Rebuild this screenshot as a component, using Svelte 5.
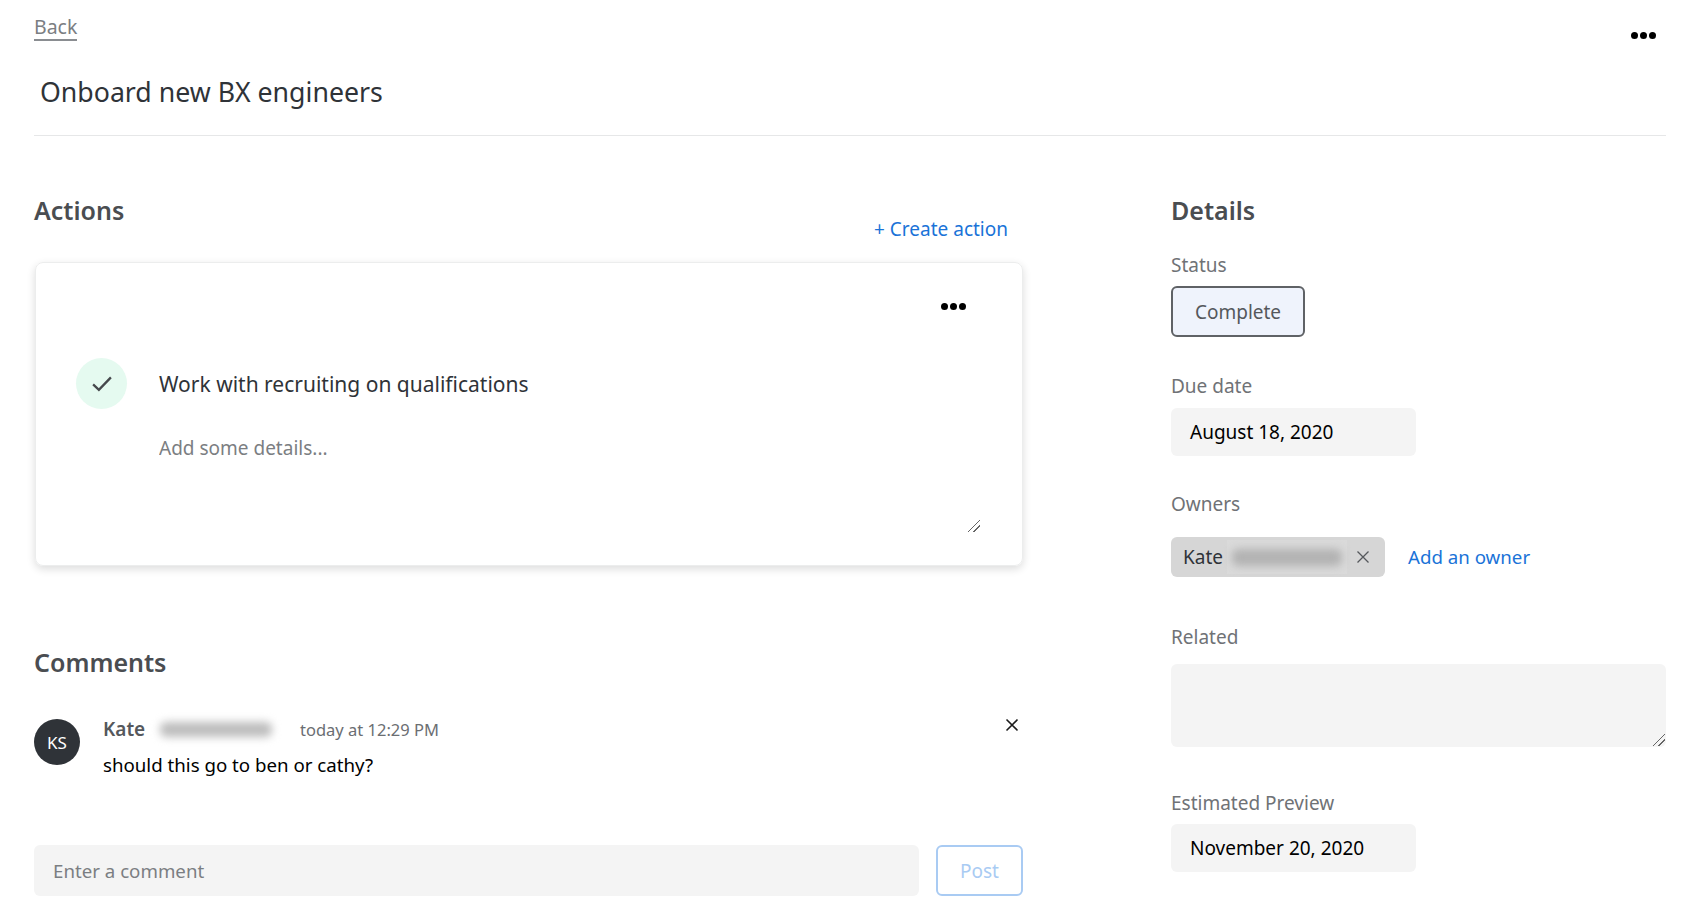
<script>
    let comment = "should this go to ben or cathy?";
</script>

<div class="page">
    <header class="top">
        <div class="top-row">
            <a class="back" href="#back">Back</a>
            <button class="dots page-dots" aria-label="More"><i></i><i></i><i></i></button>
        </div>
        <h1>Onboard new BX engineers</h1>
    </header>

    <div class="columns">
        <main>
            <div class="actions-head">
                <h2>Actions</h2>
                <a class="create" href="#create">+ Create action</a>
            </div>

            <section class="card">
                <div class="card-top">
                    <button class="dots" aria-label="More"><i></i><i></i><i></i></button>
                </div>
                <div class="action-row">
                    <div class="check">
                        <svg width="20" height="16" viewBox="0 0 22 18" fill="none"><path d="M1 9.5 L7.5 15.5 L21 1.5" stroke="#45484c" stroke-width="2.6" /></svg>
                    </div>
                    <div class="action-title">Work with recruiting on qualifications</div>
                </div>
                <textarea class="details-input" placeholder="Add some details..."></textarea>
            </section>

            <h2 class="comments-head">Comments</h2>
            <div class="comment">
                <div class="avatar">KS</div>
                <div class="comment-body">
                    <div class="comment-meta">
                        <strong>Kate</strong>
                        <span class="blur-box"><span class="smudge"></span></span>
                        <span class="time">today at 12:29 PM</span>
                    </div>
                    <div class="comment-text">{comment}</div>
                </div>
                <button class="close" aria-label="Delete">
                    <svg width="14" height="14" viewBox="0 0 14 14"><path d="M1.5 1.5 L12.5 12.5 M12.5 1.5 L1.5 12.5" stroke="#1c1c1c" stroke-width="1.6" /></svg>
                </button>
            </div>
            <div class="composer">
                <input placeholder="Enter a comment" />
                <button class="post">Post</button>
            </div>
        </main>

        <aside>
            <h2>Details</h2>
            <div class="label status-label">Status</div>
            <button class="status">Complete</button>

            <div class="label due-label">Due date</div>
            <div class="value">August 18, 2020</div>

            <div class="label owners-label">Owners</div>
            <div class="owners">
                <div class="chip">
                    <span class="chip-name">Kate</span>
                    <span class="chip-blur"><span class="smudge dark"></span></span>
                    <svg width="14" height="14" viewBox="0 0 14 14"><path d="M1.5 1.5 L12.5 12.5 M12.5 1.5 L1.5 12.5" stroke="#55585c" stroke-width="1.3" /></svg>
                </div>
                <a class="add-owner" href="#owner">Add an owner</a>
            </div>

            <div class="label related-label">Related</div>
            <textarea class="related"></textarea>

            <div class="label preview-label">Estimated Preview</div>
            <div class="value">November 20, 2020</div>
        </aside>
    </div>
</div>

<style>
    :global(body) {
        background: #fff;
    }

    .page {
        box-sizing: border-box;
        width: 1700px;
        height: 920px;
        overflow: hidden;
        padding: 0 34px;
        font-family: "Noto Sans", "Open Sans", sans-serif;
        color: #2f3338;
    }

    .top {
        height: 135px;
        border-bottom: 1px solid #e6e7e8;
    }

    .top-row {
        display: flex;
        justify-content: space-between;
        padding-top: 15px;
    }

    .back {
        font-size: 19.5px;
        line-height: 24px;
        height: 24px;
        color: #7b7e82;
        text-decoration: none;
        border-bottom: 2px solid #8a8d91;
    }

    .dots {
        display: flex;
        gap: 2px;
        padding: 0;
        border: 0;
        background: none;
    }

    .dots i {
        width: 7px;
        height: 7px;
        border-radius: 50%;
        background: #000;
    }

    .page-dots {
        margin: 17px 10px 0 0;
        height: 7px;
    }

    h1 {
        margin: 32px 0 0 6px;
        font-size: 26.7px;
        line-height: 38px;
        font-weight: 400;
    }

    h2 {
        margin: 0;
        font-size: 25px;
        line-height: 34px;
        font-weight: 600;
        color: #4a4d51;
    }

    .columns {
        display: flex;
        justify-content: space-between;
        padding-top: 57px;
    }

    main {
        width: 989px;
    }

    aside {
        width: 495px;
    }

    .actions-head {
        display: flex;
        justify-content: space-between;
        height: 69px;
    }

    .create {
        margin: 23px 15px 0 0;
        font-size: 19px;
        line-height: 27px;
        height: 27px;
        color: #1a73d8;
        text-decoration: none;
    }

    .card {
        box-sizing: border-box;
        height: 304px;
        margin-left: 1px;
        border: 1px solid #eceded;
        border-radius: 8px;
        box-shadow: 0 3px 8px rgba(0, 0, 0, 0.14);
    }

    .card-top {
        display: flex;
        justify-content: flex-end;
        padding: 40px 56px 0 0;
    }

    .action-row {
        display: flex;
        align-items: center;
        gap: 32px;
        margin: 48px 0 0 40px;
    }

    .check {
        display: flex;
        align-items: center;
        justify-content: center;
        width: 51px;
        height: 51px;
        border-radius: 50%;
        background: #e5faf0;
    }

    .action-title {
        font-size: 21px;
        line-height: 32px;
    }

    .details-input {
        display: block;
        box-sizing: border-box;
        width: 822px;
        height: 98px;
        margin: 26px 0 0 123px;
        padding: 0;
        border: 0;
        outline: 0;
        font: 19px/27px "Noto Sans", sans-serif;
    }

    .details-input::placeholder {
        color: #7b7e82;
    }

    .details-input::-webkit-resizer,
    .related::-webkit-resizer {
        background: linear-gradient(135deg, transparent 0 46%, #666 46% 54%, transparent 54% 70%, #666 70% 78%, transparent 78%) no-repeat right 1px bottom 1px / 12px 12px;
    }

    .comments-head {
        margin-top: 79px;
    }

    .comment {
        display: flex;
        margin-top: 31px;
        height: 135px;
    }

    .avatar {
        flex: none;
        display: flex;
        align-items: center;
        justify-content: center;
        width: 46px;
        height: 46px;
        margin-top: 9px;
        border-radius: 50%;
        background: #2f3338;
        color: #fff;
        font-size: 17px;
    }

    .comment-body {
        flex: 1;
        margin: 4px 0 0 23px;
    }

    .comment-meta {
        display: flex;
        align-items: center;
        height: 30px;
    }

    .comment-meta strong {
        width: 42px;
        font-size: 19px;
        font-weight: 600;
        color: #55585c;
    }

    .blur-box {
        display: flex;
        align-items: center;
        justify-content: center;
        width: 128px;
        height: 30px;
        margin-left: 7px;
    }

    .smudge {
        display: block;
        width: 88%;
        height: 50%;
        border-radius: 6px;
        background: #bdbdbd;
        filter: blur(4px);
    }

    .smudge.dark {
        width: 92%;
        background: #b2b2b2;
    }

    .time {
        margin-left: 20px;
        font-size: 16.5px;
        color: #6b6e72;
    }

    .comment-text {
        margin-top: 7px;
        font-size: 18.7px;
        line-height: 27px;
        color: #000;
    }

    .close {
        display: flex;
        height: 14px;
        margin: 8px 4px 0 0;
        padding: 0;
        border: 0;
        background: none;
    }

    .composer {
        display: flex;
        gap: 17px;
    }

    .composer input {
        box-sizing: border-box;
        width: 885px;
        height: 51px;
        padding: 0 19px;
        border: 0;
        border-radius: 6px;
        outline: 0;
        background: #f4f4f4;
        font: 18.7px "Noto Sans", sans-serif;
    }

    .composer input::placeholder {
        color: #7b7e82;
    }

    .post {
        box-sizing: border-box;
        width: 87px;
        height: 51px;
        border: 2px solid #a9cbf3;
        border-radius: 6px;
        background: #fff;
        color: #a9cbf3;
        font: 19px "Noto Sans", sans-serif;
    }

    .label {
        font-size: 19px;
        line-height: 27px;
        color: #6f7276;
    }

    .status-label {
        margin-top: 25px;
    }

    .status {
        display: block;
        box-sizing: border-box;
        width: 134px;
        height: 51px;
        margin-top: 7px;
        border: 2px solid #5f6266;
        border-radius: 6px;
        background: #eff3fc;
        color: #55585c;
        font: 19px "Noto Sans", sans-serif;
    }

    .due-label {
        margin-top: 36px;
    }

    .value {
        box-sizing: border-box;
        width: 245px;
        height: 48px;
        margin-top: 8px;
        padding: 0 19px;
        border-radius: 6px;
        background: #f4f4f4;
        color: #000;
        font-size: 19px;
        line-height: 48px;
    }

    .owners-label {
        margin-top: 35px;
    }

    .owners {
        display: flex;
        align-items: center;
        gap: 23px;
        margin-top: 19px;
    }

    .chip {
        display: flex;
        align-items: center;
        box-sizing: border-box;
        width: 214px;
        height: 40px;
        padding-left: 12px;
        border-radius: 6px;
        background: #d6d6d6;
        font-size: 19px;
    }

    .chip-name {
        width: 41px;
    }

    .chip-blur {
        display: flex;
        align-items: center;
        justify-content: center;
        width: 120px;
        height: 34px;
        margin: 0 9px 0 3px;
        background: #dadada;
    }

    .add-owner {
        margin-top: -2px;
        font-size: 18.7px;
        color: #1a73d8;
        text-decoration: none;
    }

    .related-label {
        margin-top: 47px;
    }

    .related {
        display: block;
        box-sizing: border-box;
        width: 495px;
        height: 83px;
        margin-top: 13px;
        border: 0;
        border-radius: 6px;
        outline: 0;
        background: #f4f4f4;
    }

    .preview-label {
        margin-top: 43px;
    }

    .preview-label + .value {
        margin-top: 7px;
    }
</style>
